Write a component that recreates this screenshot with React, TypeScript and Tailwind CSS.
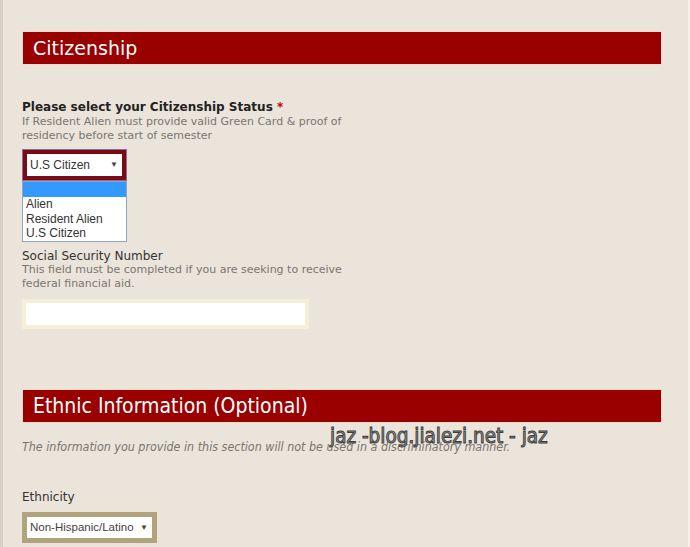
import React from "react";

const verdana = "font-['DejaVu_Sans',Verdana,sans-serif]";
const arial = "font-['Liberation_Sans',Arial,sans-serif]";
const tahoma = "font-['DejaVu_Sans_Condensed','DejaVu_Sans',sans-serif]";

function SectionBar({ title, className }: { title: string; className?: string }) {
  return (
    <div className="ml-px flex h-8 w-[638px] items-center bg-[#990000] pl-[10px] shadow-[0_0_0_1px_#f3d9cc]">
      <h2 className={`leading-none text-white ${className ?? ""}`}>{title}</h2>
    </div>
  );
}

export default function App() {
  const options = ["Alien", "Resident Alien", "U.S Citizen"];
  return (
    <div className="h-[547px] w-[690px] overflow-hidden border-l-[3px] border-r-2 border-l-[#d6d0c7] border-r-[#f4f0ea] bg-[#ebe4da] pl-[19px] pt-8">
      <SectionBar title="Citizenship" className={`text-[19px] ${verdana}`} />

      <div className={`mt-[35px] ${verdana}`}>
        <p className="text-[12px] font-bold leading-[16px] text-[#222]">
          Please select your Citizenship Status <span className="text-[#d40000]">*</span>
        </p>
        <p className="w-[330px] text-[11px] leading-[14px] text-[#7a7670]">
          If Resident Alien must provide valid Green Card &amp; proof of residency before start of semester
        </p>
      </div>

      <div className="relative mt-[6px] w-[105px]">
        <div className="h-8 border border-[#8c6b98] bg-[#7b0a14] p-[4px]">
          <div className={`flex h-full items-center justify-between bg-white pl-[3px] pr-[4px] text-[12px] text-[#333] ${arial}`}>
            <span>U.S Citizen</span>
            <span className="text-[8px] text-[#444]">▼</span>
          </div>
        </div>
        <ul className={`absolute left-0 top-8 w-[105px] border border-[#8ea4c4] bg-white text-[12px] text-[#333] ${arial}`}>
          <li className="h-[15px] bg-[#3399ff]" />
          {options.map((o) => (
            <li key={o} className="h-[14.5px] pl-[3px] leading-[14.5px]">
              {o}
            </li>
          ))}
        </ul>
      </div>

      <div className={`mt-[68px] ${verdana}`}>
        <p className="text-[12px] leading-[14px] text-[#333]">Social Security Number</p>
        <p className="w-[330px] text-[11px] leading-[14px] text-[#7a7670]">
          This field must be completed if you are seeking to receive federal financial aid.
        </p>
      </div>

      <div className="mt-2 h-[30px] w-[287px] border-4 border-[#f6eed8] bg-white" />

      <div className="mt-[61px]">
        <SectionBar title="Ethnic Information (Optional)" className={`text-[21px] ${tahoma}`} />
      </div>

      <div className="relative mt-[18px]">
        <p className={`text-[12.4px] italic leading-[14px] text-[#7a7670] ${tahoma}`}>
          The information you provide in this section will not be used in a discriminatory manner.
        </p>
        <span
          className={`absolute left-[308px] top-[-14px] text-[20.5px] leading-none text-[#9a9a9a] [-webkit-text-stroke:0.9px_#3a3a3a] ${tahoma}`}
        >
          jaz -blog.jialezi.net - jaz
        </span>
      </div>

      <p className={`mt-9 text-[12px] leading-[14px] text-[#333] ${verdana}`}>Ethnicity</p>

      <div className="mt-2 h-[31px] w-[135px] border-[5px] border-[#b1a47d] bg-white">
        <div className={`flex h-full items-center justify-between pl-[3px] pr-[4px] text-[11.5px] text-[#444] ${arial}`}>
          <span>Non-Hispanic/Latino</span>
          <span className="text-[8px] text-[#444]">▼</span>
        </div>
      </div>
    </div>
  );
}
